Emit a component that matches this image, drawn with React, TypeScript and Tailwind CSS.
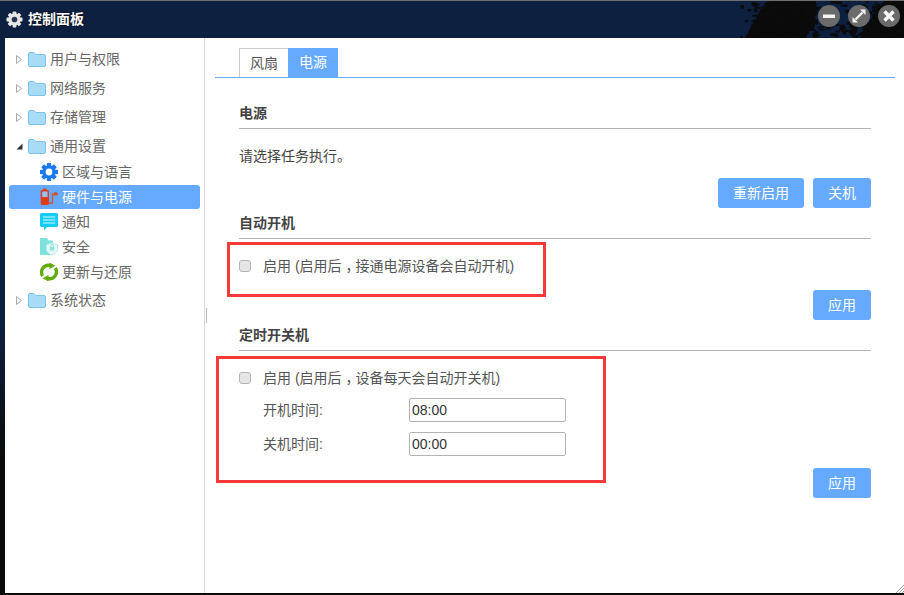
import React from "react";

const font = { fontFamily: '"Liberation Sans","Noto Sans CJK SC",sans-serif' };

const specks: { x: number; y: number; w: number; h: number }[] = [];
let seed = 7;
const rnd = () => {
  seed = (seed * 16807) % 2147483647;
  return seed / 2147483647;
};
for (let i = 0; i < 520; i++) {
  const x = 735 + rnd() * 169;
  const y = rnd() * 37;
  const edge = x < 760 ? (x - 735) / 25 : x > 815 && x < 880 ? 0.45 : 1;
  if (rnd() < edge) specks.push({ x, y, w: 2 + rnd() * 5, h: 1 + rnd() * 3 });
}

function Folder() {
  return (
    <svg width="18" height="15" viewBox="0 0 18 15" className="shrink-0">
      <path d="M0.500 3V2a1.500 1.500 0 0 1 1.500-1.500h4L8 2.500h8A1.500 1.500 0 0 1 17.500 4v9a1.500 1.500 0 0 1-1.500 1.500H2A1.500 1.500 0 0 1 .5 13z" fill="#a8dcf6" stroke="#7cc3ea" />
    </svg>
  );
}

function Tri({ open }: { open?: boolean }) {
  return (
    <span className="w-[12px] ml-[4px] shrink-0 flex items-center">
      {open ? (
        <svg width="7" height="7" viewBox="0 0 7 7"><path d="M0.500 6.500L6.500 .5V6.500z" fill="#333" /></svg>
      ) : (
        <svg width="6" height="9" viewBox="0 0 6 9"><path d="M.5.500L5.500 4.500L.5 8.500z" fill="#fff" stroke="#aaa" /></svg>
      )}
    </span>
  );
}

function Group({ label, open }: { label: string; open?: boolean }) {
  return (
    <div className="flex items-center h-[29px] pl-[7px] text-[14px] text-[#666]">
      <Tri open={open} />
      <Folder />
      <span className="ml-[4px]">{label}</span>
    </div>
  );
}

function GearIcon() {
  const teeth = [0, 45, 90, 135];
  return (
    <svg width="18" height="18" viewBox="0 0 18 18">
      {teeth.map((a) => (
        <rect key={a} x="6.800" y="0" width="4.400" height="18" rx="0.800" fill="#1a78f0" transform={`rotate(${a} 9 9)`} />
      ))}
      <circle cx="9" cy="9" r="6.500" fill="#1a78f0" />
      <circle cx="9" cy="9" r="3.400" fill="#fff" />
    </svg>
  );
}

function HardwareIcon() {
  return (
    <svg width="18" height="18" viewBox="0 0 18 18">
      <rect x="3" y="0.500" width="3.500" height="2" fill="#d9481c" />
      <rect x="0.700" y="2" width="8.300" height="15" rx="1.500" fill="#e03c14" />
      <rect x="2.200" y="3.500" width="5.300" height="5.500" fill="#9cc2f5" />
      <path d="M9 15h3.500V6H18" fill="none" stroke="#c9583a" strokeWidth="1.400" />
      <circle cx="15.500" cy="6" r="1.900" fill="#c9583a" />
    </svg>
  );
}

function NotifyIcon() {
  return (
    <svg width="18" height="18" viewBox="0 0 18 18">
      <path d="M1.500 0h15A1.500 1.500 0 0 1 18 1.500v11a1.500 1.500 0 0 1-1.500 1.500H7l-3 3.500V14H1.500A1.500 1.500 0 0 1 0 12.500v-11A1.500 1.500 0 0 1 1.500 0z" fill="#14cdf5" />
      <path d="M3 4h12M3 7h12M3 10h12" stroke="#d8f7fd" strokeWidth="1" />
    </svg>
  );
}

function SecurityIcon() {
  return (
    <svg width="18" height="18" viewBox="0 0 18 18">
      <path d="M0 0h7l1.500 2.500H13V17H0z" fill="#7fe0dc" />
      <path d="M12 5l5.500 1.800v4.500c0 2.800-2.500 4.700-5.500 5.700-3-1-5.500-2.900-5.500-5.700V6.800z" fill="#e8f9f8" stroke="#b5edea" />
      <rect x="9.800" y="9" width="4.500" height="3.500" fill="#8fe3df" />
      <path d="M10.500 9V8a1.500 1.500 0 0 1 3 0v1" fill="none" stroke="#8fe3df" />
    </svg>
  );
}

function UpdateIcon() {
  return (
    <svg width="18" height="18" viewBox="0 0 18 18" fill="none">
      <path d="M2.700 13A7 7 0 0 1 10.500 2.500" stroke="#62ad12" strokeWidth="3.400" />
      <path d="M9.500 -0.500l6 3.200-6 3.300z" fill="#62ad12" />
      <path d="M15.300 5A7 7 0 0 1 7.500 15.500" stroke="#62ad12" strokeWidth="3.400" />
      <path d="M8.500 18.500l-6-3.200 6-3.300z" fill="#62ad12" />
    </svg>
  );
}

function Child({ icon, label, active }: { icon: React.ReactNode; label: string; active?: boolean }) {
  return (
    <div className={`flex items-center h-[24px] mb-[1px] mx-[4px] rounded-[3px] pl-[31px] text-[14px] ${active ? "bg-[#66aaff] text-white" : "text-[#666]"}`}>
      <span className="w-[18px] h-[18px] shrink-0 flex">{icon}</span>
      <span className="ml-[4px]">{label}</span>
    </div>
  );
}

function Section({ title }: { title: string }) {
  return (
    <div className="h-[26px] border-b border-[#b3b3b3] text-[14px] font-bold text-[#444] leading-[20px]">{title}</div>
  );
}

function Btn({ label, w }: { label: string; w: string }) {
  return (
    <button className={`${w} h-[30px] rounded-[3px] bg-[#66aaff] text-white text-[14px]`}>{label}</button>
  );
}

function Check({ before, after }: { before: string; after: string }) {
  return (
    <div className="flex items-center h-[24px] text-[14px] text-[#555]">
      <span className="w-[12px] h-[12px] rounded-[3px] border border-[#b4b4b4] bg-[#e6e6e6] shrink-0" />
      <span className="ml-[12px]">
        {before}
        <span className="inline-block pl-[4px] tracking-[-4px]">，</span>
        {after}
      </span>
    </div>
  );
}

function TimeRow({ label, value }: { label: string; value: string }) {
  return (
    <div className="flex items-center h-[24px] pl-[24px] text-[14px] text-[#555]">
      <span className="w-[146px]">{label}</span>
      <div className="w-[157px] h-[24px] border border-[#b3b3b3] rounded-[2px] pl-[2px] flex items-center text-[14px] text-[#333]">{value}</div>
    </div>
  );
}

export default function App() {
  return (
    <div style={font} className="relative w-[904px] h-[595px] overflow-hidden bg-[linear-gradient(180deg,#0d1f3f_0%,#0d1f3f_55%,#0a0a08_78%,#0a0a08_100%)] flex flex-col">
      <div className="h-[1px] bg-[#6e6e6e]" />
      <div className="relative h-[37px] shrink-0 flex pl-[6px] pr-[4px] bg-[#0e2040]">
        <svg width="904" height="37" viewBox="0 0 904 37" className="absolute left-0 top-0">
          <path d="M745 37L752 24L760 10L772 0H816V14L806 37zM860 37L872 16L884 0H904V37z" fill="#0a0b0a" />
          {specks.map((s, i) => (
            <rect key={i} x={s.x} y={s.y} width={s.w} height={s.h} fill="#0a0b0a" />
          ))}
        </svg>
        <div className="relative flex items-center h-[35px] mt-[1px]">
          <svg width="17" height="17" viewBox="0 0 18 18" className="shrink-0">
            {[0, 45, 90, 135].map((a) => (
              <rect key={a} x="7" y="0.500" width="4" height="17" rx="1" fill="#e6e6e6" transform={`rotate(${a} 9 9)`} />
            ))}
            <circle cx="9" cy="9" r="6.500" fill="#e6e6e6" />
            <circle cx="9" cy="9" r="3" fill="#2a3550" />
          </svg>
          <span className="ml-[5px] text-[14px] font-bold text-white [text-shadow:0_0_2px_#000]">控制面板</span>
        </div>
        <div className="relative ml-auto flex gap-[8px] pt-[4px]">
          <span className="w-[22px] h-[22px] rounded-full bg-[#6b6b6b] flex items-center justify-center">
            <svg width="14" height="14" viewBox="0 0 14 14"><rect x="1" y="5.500" width="12" height="3.500" fill="#f4f4f4" /></svg>
          </span>
          <span className="w-[22px] h-[22px] rounded-full bg-[#6b6b6b] flex items-center justify-center">
            <svg width="16" height="16" viewBox="0 0 16 16"><path d="M4.500 11.500L11.500 4.500" stroke="#f4f4f4" strokeWidth="2.400" /><path d="M9 1.500h5.500V7zM1.500 9v5.500H7z" fill="#f4f4f4" /></svg>
          </span>
          <span className="w-[22px] h-[22px] rounded-full bg-[#6b6b6b] flex items-center justify-center">
            <svg width="14" height="14" viewBox="0 0 14 14"><path d="M2.500 2.500L11.500 11.500M11.500 2.500L2.500 11.500" stroke="#f8f8f8" strokeWidth="3.400" /></svg>
          </span>
        </div>
      </div>

      <div className="flex h-[555px] ml-[5px] bg-white">
        <div className="w-[200px] shrink-0 border-r border-[#d9d9d9] pt-[7px]">
          <Group label="用户与权限" />
          <Group label="网络服务" />
          <Group label="存储管理" />
          <Group label="通用设置" open />
          <div className="mt-[-1px]">
            <Child icon={<GearIcon />} label="区域与语言" />
            <Child icon={<HardwareIcon />} label="硬件与电源" active />
            <Child icon={<NotifyIcon />} label="通知" />
            <Child icon={<SecurityIcon />} label="安全" />
            <Child icon={<UpdateIcon />} label="更新与还原" />
          </div>
          <div className="mt-[2px]">
            <Group label="系统状态" />
          </div>
        </div>
        <div className="relative flex-1 min-w-0">
          <span className="absolute left-[1px] top-[270px] w-[1px] h-[15px] bg-[#bbb]" />
          <div className="ml-[10px] mr-[9px] mt-[10px] h-[30px] border-b border-[#66aaff] pl-[24px] flex items-end text-[14px]">
            <div className="w-[49px] h-[29px] border-t border-l border-[#ccc] flex items-center justify-center text-[#555]">风扇</div>
            <div className="w-[50px] h-[29px] bg-[#66aaff] text-white flex items-center justify-center">电源</div>
          </div>

          <div className="ml-[34px] mr-[33px]">
            <div className="mt-[25px]"><Section title="电源" /></div>
            <div className="mt-[17px] text-[14px] leading-[20px] text-[#444]">请选择任务执行。</div>
            <div className="mt-[12px] flex justify-end gap-[9px]">
              <Btn label="重新启用" w="w-[86px]" />
              <Btn label="关机" w="w-[58px]" />
            </div>
            <div className="mt-[5px]"><Section title="自动开机" /></div>
            <div className="mt-[15px]"><Check before="启用 (启用后" after="接通电源设备会自动开机)" /></div>
            <div className="mt-[12px] flex justify-end"><Btn label="应用" w="w-[58px]" /></div>
            <div className="mt-[5px]"><Section title="定时开关机" /></div>
            <div className="mt-[15px]"><Check before="启用 (启用后" after="设备每天会自动开关机)" /></div>
            <div className="mt-[8px] flex flex-col gap-[10px]">
              <TimeRow label="开机时间:" value="08:00" />
              <TimeRow label="关机时间:" value="00:00" />
            </div>
            <div className="mt-[12px] flex justify-end"><Btn label="应用" w="w-[58px]" /></div>
          </div>
        </div>
      </div>

      <div className="absolute left-[227px] top-[242px] w-[319px] h-[55px] border-[3px] border-[#f53a3a]" />
      <div className="absolute left-[216px] top-[356px] w-[390px] h-[127px] border-[3px] border-[#f53a3a]" />
      <svg width="8" height="8" viewBox="0 0 8 8" className="absolute right-0 bottom-[2px]">
        <path d="M0 8L8 0M3 8L8 3M6 8L8 6" stroke="#999" strokeWidth="1" />
      </svg>
    </div>
  );
}
